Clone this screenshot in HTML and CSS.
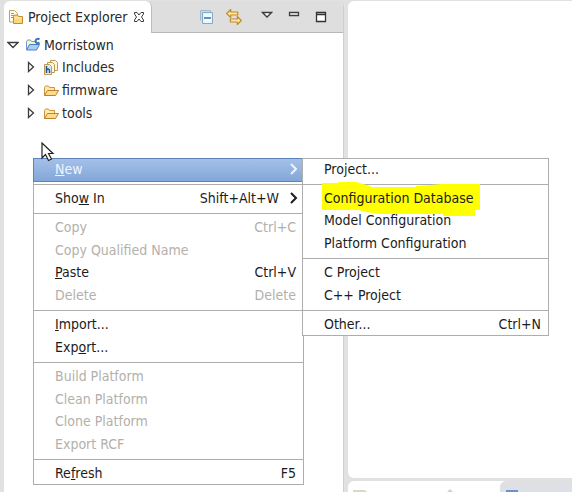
FILE: index.html
```html
<!DOCTYPE html>
<html lang="en">
<head>
<meta charset="utf-8">
<title>Project Explorer</title>
<link rel="stylesheet" href="styles.css">
</head>
<body>
<div class="workbench">
  <section class="view" aria-label="Project Explorer">
    <header class="view-bar">
      <div class="tab">
        <svg class="icon" width="16" height="16" viewBox="0 0 16 16" aria-hidden="true">
          <path d="M1.500 1.500h5l3 3v8.500h-8z" fill="#fffdf0" stroke="#c0a467"/>
          <path d="M3 4.500h3M3 6.500h3M3 8.500h2" stroke="#7c9cc8"/>
          <path d="M5.500 7.500l1-1.500h3l1 1.500h4v7h-9z" fill="#fbd77f" stroke="#c58a2c"/>
          <path d="M6.500 9h7" stroke="#fff0b8"/>
        </svg>
        <span>Project Explorer</span>
        <button class="tool" aria-label="Close">
          <svg width="12" height="12" viewBox="0 0 12 12"><path d="M1.500 1.500h2.500l2 2.500 2-2.500h2.500v1.500l-2 3 2 3v1.500h-2.500l-2-2.500-2 2.500h-2.500v-1.500l2-3-2-3z" fill="#fff" stroke="#3c3c3c"/></svg>
        </button>
      </div>
      <div class="toolbar">
        <button class="tool" aria-label="Collapse All">
          <svg width="14" height="14" viewBox="0 0 14 14"><path d="M.5 10.500v-10h10v2" fill="#c5dcef" stroke="#9dbbd3"/><path d="M2.500 2.500h10v11h-10z" fill="#e5f4ff" stroke="#88a9c6"/><path d="M4.500 4.500h6.500v7h-6.500z" fill="#f6fcff"/><path d="M4 8h7" stroke="#2c70ad" stroke-width="1.500"/></svg>
        </button>
        <button class="tool" aria-label="Link with Editor">
          <svg width="16" height="16" viewBox="0 0 16 16"><path d="M.7 4.500l4-4v2.500h7v3h-7v2.500zM15.300 11.500l-4-4v2.500h-7v3h7v2.500z" fill="#ffe7a0" stroke="#c98a22" stroke-width="1.200" stroke-linejoin="round"/></svg>
        </button>
        <button class="tool menu-tool" aria-label="View Menu">
          <svg width="12" height="12" viewBox="0 0 12 12"><path d="M1.500 1.500h9l-4.500 4.500z" fill="#fff" stroke="#3c3c3c" stroke-width="1.300"/></svg>
        </button>
        <button class="tool" aria-label="Minimize">
          <svg width="12" height="12" viewBox="0 0 12 12"><path d="M1.500 1.500h9v3h-9z" fill="#fff" stroke="#3c3c3c" stroke-width="1.300"/></svg>
        </button>
        <button class="tool" aria-label="Maximize">
          <svg width="12" height="12" viewBox="0 0 12 12"><path d="M1.500 1.500h9v9h-9zM1.500 3.500h9" fill="#fff" stroke="#333" stroke-width="1.300"/></svg>
        </button>
      </div>
    </header>
    <ul class="tree">
      <li>
        <div class="node">
          <svg class="arrow" width="12" height="12" viewBox="0 0 12 12" aria-hidden="true"><path d="M1 3.500h10l-5 5z" fill="#fff" stroke="#3c3c3c" stroke-width="1.300"/></svg>
          <svg class="icon" width="16" height="16" viewBox="0 0 16 16" aria-hidden="true">
            <path d="M1.500 12.500v-8l1-1.500h3l1 1.500h5v3" fill="#fff3bd" stroke="#6f9ad4"/>
            <path d="M1.500 13l3-5.500h10l-3 5.500z" fill="#a9cdf7" stroke="#477fc6" stroke-linejoin="round"/>
            <path d="M14.500 2.300c-2-1.300-4 0-4 1.700s2 3 4 1.700" fill="none" stroke="#3c75bd" stroke-width="2"/>
          </svg>
          <span>Morristown</span>
        </div>
        <ul class="branch">
          <li class="node">
            <svg class="arrow" width="12" height="12" viewBox="0 0 12 12" aria-hidden="true"><path d="M3.500 1.500v9l5-4.500z" fill="#fff" stroke="#3c3c3c" stroke-width="1.300"/></svg>
            <svg class="icon" width="16" height="16" viewBox="0 0 16 16" aria-hidden="true">
              <path d="M7.500 1.500h5l2 2v8h-7z" fill="#fff8df" stroke="#bb9b55"/>
              <path d="M4.500 3.500h5l2 2v8h-7z" fill="#fff8df" stroke="#bb9b55"/>
              <path d="M1.500 5.500h5l2 2v8h-7z" fill="#dceaf8" stroke="#bb9b55"/>
              <path d="M3.500 7v7M3.500 11q3-2 3 .500v2.500" fill="none" stroke="#2b5583" stroke-width="1.500"/>
            </svg>
            <span>Includes</span>
          </li>
          <li class="node">
            <svg class="arrow" width="12" height="12" viewBox="0 0 12 12" aria-hidden="true"><path d="M3.500 1.500v9l5-4.500z" fill="#fff" stroke="#3c3c3c" stroke-width="1.300"/></svg>
            <svg class="icon" width="16" height="16" viewBox="0 0 16 16" aria-hidden="true">
              <path d="M1.500 13.500v-8l1-1.500h3l1 1.500h5v3" fill="#ffeaa9" stroke="#cc9240"/>
              <path d="M1.500 13.500l3-5h11l-3 5z" fill="#ffdc8d" stroke="#c07f2b" stroke-linejoin="round"/>
            </svg>
            <span>firmware</span>
          </li>
          <li class="node">
            <svg class="arrow" width="12" height="12" viewBox="0 0 12 12" aria-hidden="true"><path d="M3.500 1.500v9l5-4.500z" fill="#fff" stroke="#3c3c3c" stroke-width="1.300"/></svg>
            <svg class="icon" width="16" height="16" viewBox="0 0 16 16" aria-hidden="true">
              <path d="M1.500 13.500v-8l1-1.500h3l1 1.500h5v3" fill="#ffeaa9" stroke="#cc9240"/>
              <path d="M1.500 13.500l3-5h11l-3 5z" fill="#ffdc8d" stroke="#c07f2b" stroke-linejoin="round"/>
            </svg>
            <span>tools</span>
          </li>
        </ul>
      </li>
    </ul>
  </section>
  <main class="editors">
    <div class="editor"></div>
    <div class="console">
      <div class="console-tab">
        <svg width="120" height="3" viewBox="0 0 120 3" aria-hidden="true"><path d="M0 1h12l2 2H0z" fill="#ddd8c4"/><path d="M94 3l3-3 3 3z" fill="#cbd1ea"/></svg>
      </div>
      <div class="console-rest">
        <svg width="12" height="3" viewBox="0 0 12 3" aria-hidden="true"><path d="M0 1h12v2H0z" fill="#6d91cc"/></svg>
      </div>
    </div>
  </main>
</div>

<div class="menu context-menu" role="menu">
  <div class="group first">
    <button class="item selected" role="menuitem"><span><u>N</u>ew</span><svg class="chevron" width="10" height="14" viewBox="0 0 10 14" aria-hidden="true"><path d="M2 2l5 5-5 5"/></svg></button>
  </div>
  <div class="group">
    <button class="item" role="menuitem"><span>Sho<u>w</u> In</span><kbd>Shift+Alt+W</kbd><svg class="chevron" width="10" height="14" viewBox="0 0 10 14" aria-hidden="true"><path d="M2 2l5 5-5 5"/></svg></button>
  </div>
  <div class="group four">
    <button class="item" role="menuitem" disabled><span>Copy</span><kbd>Ctrl+C</kbd></button>
    <button class="item" role="menuitem" disabled><span>Copy Qualified Name</span></button>
    <button class="item" role="menuitem"><span><u>P</u>aste</span><kbd>Ctrl+V</kbd></button>
    <button class="item" role="menuitem" disabled><span>Delete</span><kbd>Delete</kbd></button>
  </div>
  <div class="group two">
    <button class="item" role="menuitem"><span><u>I</u>mport...</span></button>
    <button class="item" role="menuitem"><span>Exp<u>o</u>rt...</span></button>
  </div>
  <div class="group four">
    <button class="item" role="menuitem" disabled><span>Build Platform</span></button>
    <button class="item" role="menuitem" disabled><span>Clean Platform</span></button>
    <button class="item" role="menuitem" disabled><span>Clone Platform</span></button>
    <button class="item" role="menuitem" disabled><span>Export RCF</span></button>
  </div>
  <div class="group last">
    <button class="item" role="menuitem"><span>Re<u>f</u>resh</span><kbd>F5</kbd></button>
  </div>
</div>

<div class="menu submenu" role="menu">
  <div class="group first">
    <button class="item" role="menuitem"><span>Project...</span></button>
  </div>
  <div class="group three">
    <button class="item" role="menuitem">
      <svg class="marker" width="158" height="34" viewBox="0 0 158 34" aria-hidden="true"><path d="M0 1h16v-1h18l14 4 1 1h45v-1l15-1 10-1h39v26h-5v6h-32v-2H57l-18-3-1-1H0z" fill="#ff0"/></svg>
      <span>Configuration Database</span>
    </button>
    <button class="item" role="menuitem"><span>Model Configuration</span></button>
    <button class="item" role="menuitem"><span>Platform Configuration</span></button>
  </div>
  <div class="group two">
    <button class="item" role="menuitem"><span>C Project</span></button>
    <button class="item" role="menuitem"><span>C++ Project</span></button>
  </div>
  <div class="group last">
    <button class="item" role="menuitem"><span>Other...</span><kbd>Ctrl+N</kbd></button>
  </div>
</div>

<svg class="pointer" width="14" height="20" viewBox="0 0 14 20" aria-hidden="true"><path d="M1 1v15l3.500-3.500 3 6 3-1.500-3-5.500h4.500z" fill="#fff" stroke="#222" stroke-width="1.200"/></svg>
</body>
</html>
```

FILE: styles.css
```css
* {
  box-sizing: border-box;
}

body {
  margin: 0;
  background: #e1e1e1;
  color: #2a2a2a;
  font: 14px/20px "DejaVu Sans Condensed", "DejaVu Sans", sans-serif;
  font-stretch: condensed;
}

button {
  margin: 0;
  padding: 0;
  border: 0;
  background: none;
  color: inherit;
  font: inherit;
  text-align: left;
}

svg {
  display: block;
  flex: none;
}

ul {
  margin: 0;
  padding: 0;
  list-style: none;
}

.workbench {
  display: grid;
  grid-template-columns: minmax(0, 340px) minmax(0, 1fr);
  gap: 4px;
  height: 100vh;
  padding: 1px 0 0 4px;
  overflow: hidden;
}

.view {
  border-right: 1px solid #cfcfcf;
  border-radius: 6px 6px 0 0;
  background: #fff;
  overflow: hidden;
}

.view-bar {
  display: flex;
  height: 32px;
  background: #dedede;
  box-shadow: inset 0 -1px #b8b8b8;
}

.tab {
  display: flex;
  align-items: center;
  gap: 4px;
  padding: 0 6px 0 4px;
  border-right: 1px solid #bdbdbd;
  border-radius: 6px 6px 0 0;
  background: #fff;
  white-space: nowrap;
}

.tab .tool {
  margin-left: 2px;
}

.toolbar {
  display: flex;
  flex: 1;
  align-items: center;
  justify-content: flex-end;
  gap: 15px;
  padding-right: 16px;
}

.toolbar .tool:first-child {
  margin-right: -3px;
}

.toolbar .menu-tool {
  margin-left: 4px;
}

.tree {
  padding: 1px 0 0 3px;
}

.node {
  display: flex;
  align-items: center;
  height: 22px;
}

.branch {
  display: grid;
  grid-auto-rows: 1fr;
  height: 68px;
  padding-left: 18px;
}

.branch .node {
  height: auto;
}

.arrow {
  margin-right: 6px;
}

.node .icon {
  margin-right: 3px;
}

.editors {
  display: flex;
  flex-direction: column;
  gap: 3px;
}

.editor {
  flex: 1;
  border-radius: 6px 0 0 6px;
  background: #fff;
}

.console {
  display: flex;
  height: 11px;
  border-radius: 6px 0 0 0;
  background: #fff;
  overflow: hidden;
}

.console-tab {
  display: flex;
  align-items: flex-end;
  width: 152px;
  padding-left: 5px;
}

.console-rest {
  display: flex;
  flex: 1;
  align-items: flex-end;
  padding-left: 6px;
  border-radius: 6px 0 0 0;
  background: #dfe0e6;
}

.menu {
  position: absolute;
  top: 158px;
  border: 1px solid #adadad;
  background: #fff;
  color: #1c1c1c;
}

.context-menu {
  left: 33px;
  width: 271px;
}

.submenu {
  left: 302px;
  width: 247px;
}

.group {
  display: grid;
  grid-auto-rows: 1fr;
  height: 29px;
  padding: 2px 0 4px;
  border-top: 1px solid #adadad;
}

.group.first {
  height: 25px;
  padding: 0 0 3px;
  border-top: 0;
}

.group.two {
  height: 52px;
}

.group.three {
  height: 74px;
}

.group.four {
  height: 97px;
}

.group.last {
  height: 25px;
  padding-bottom: 0;
}

.item {
  position: relative;
  display: flex;
  align-items: center;
  width: 100%;
  padding: 0 7px 2px 21px;
  line-height: 20px;
  white-space: nowrap;
}

.group:not(.first) .item {
  padding-bottom: 0;
}

.item span {
  position: relative;
  flex: 1;
}

.item:disabled {
  color: #b3b0ac;
}

.item.selected {
  background: linear-gradient(#a3c0e8, #83a7d9);
  box-shadow: 0 0 0 1px #5d84b8;
  color: #eef4fc;
}

.item u {
  text-underline-offset: 1px;
}

.item kbd {
  font: inherit;
}

.chevron {
  margin: 0 -3px 0 10px;
  fill: none;
  stroke: currentColor;
  stroke-width: 2;
}

.marker {
  position: absolute;
  top: -5px;
  left: 19px;
}

.pointer {
  position: absolute;
  top: 142px;
  left: 41px;
}
```
